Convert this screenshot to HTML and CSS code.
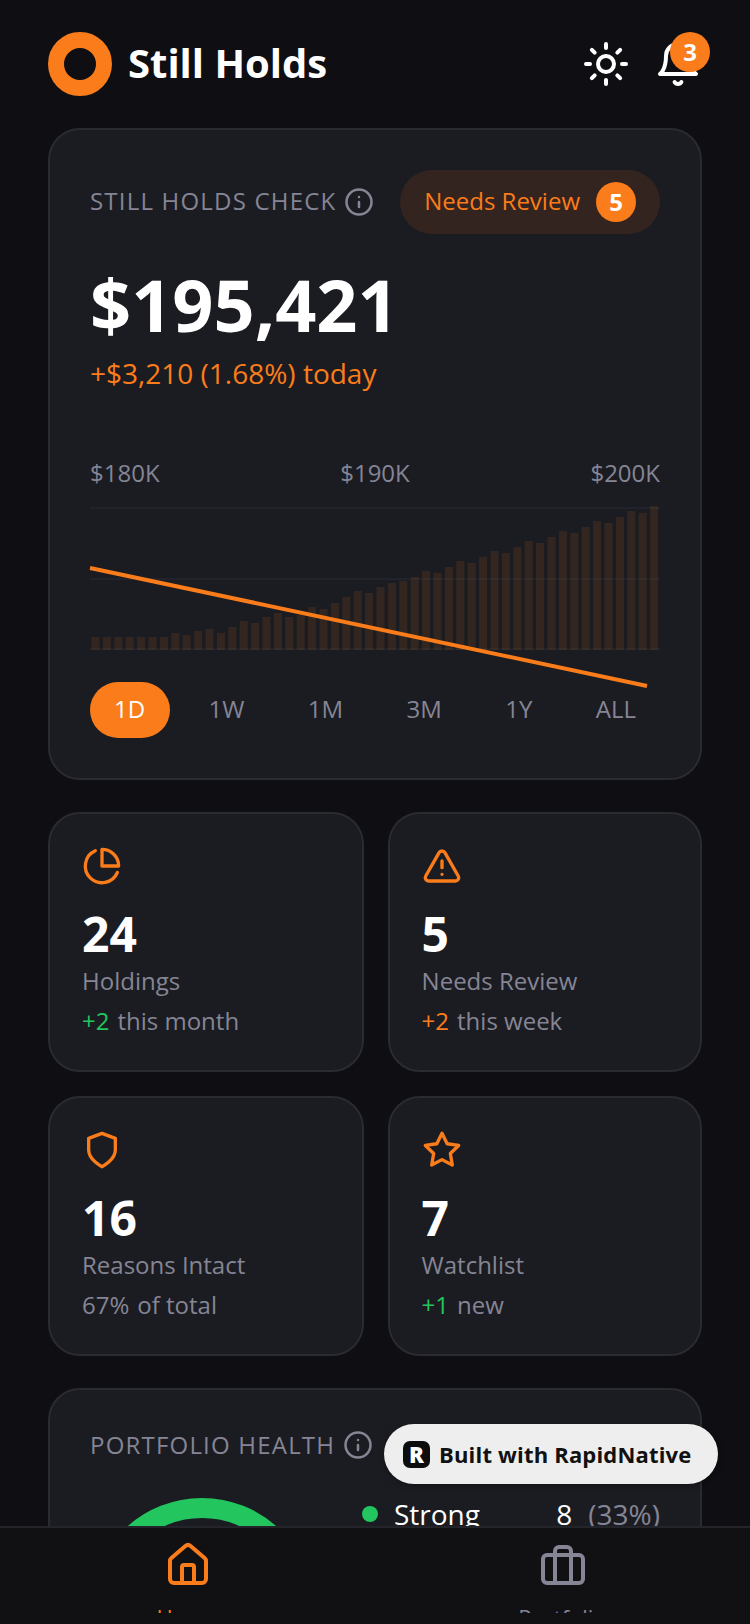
FILE: index.html
```html
<!DOCTYPE html>
<html lang="en">
<head>
  <meta charset="UTF-8">
  <meta name="viewport" content="width=device-width, initial-scale=1.0">
  <title>Still Holds</title>
  <link rel="stylesheet" href="styles.css">
</head>
<body>
  <div class="screen">
    <!-- header -->
    <header class="header">
      <div class="brand">
        <div class="logo"></div>
        <span class="brand-name">Still Holds</span>
      </div>
      <div class="header-actions">
        <svg class="icon-lg" viewBox="0 0 24 24">
          <circle cx="12" cy="12" r="4"/>
          <path d="M12 2v2M12 20v2M4.93 4.93l1.41 1.41M17.66 17.66l1.41 1.41M2 12h2M20 12h2M6.34 17.66l-1.41 1.41M19.07 4.93l-1.41 1.41"/>
        </svg>
        <div class="bell">
          <svg class="icon-lg" viewBox="0 0 24 24">
            <path d="M6 8a6 6 0 0 1 12 0c0 7 3 9 3 9H3s3-2 3-9"/>
            <path d="M10.3 21a1.94 1.94 0 0 0 3.4 0"/>
          </svg>
          <span class="bell-count">3</span>
        </div>
      </div>
    </header>

    <!-- main value card -->
    <section class="card main-card">
      <div class="card-top">
        <div class="card-title">
          <span class="raised">STILL HOLDS CHECK</span>
          <svg class="icon-info" viewBox="0 0 24 24">
            <circle cx="12" cy="12" r="10"/>
            <path d="M12 16v-4M12 8h.01"/>
          </svg>
        </div>
        <div class="review-pill">
          <span class="raised">Needs Review</span>
          <span class="review-count">5</span>
        </div>
      </div>
      <div class="balance">$195,421</div>
      <div class="delta">+$3,210 (1.68%) today</div>
      <div class="axis">
        <span>$180K</span>
        <span>$190K</span>
        <span>$200K</span>
      </div>
      <svg class="chart" viewBox="0 0 570 143">
        <g class="chart-grid">
          <path d="M0 1h570M0 72h570M0 142h570"/>
        </g>
        <g class="chart-bars">
          <rect x="1.5" y="130" width="8" height="13"/>
          <rect x="12.9" y="130" width="8" height="13"/>
          <rect x="24.3" y="130" width="8" height="13"/>
          <rect x="35.7" y="130" width="8" height="13"/>
          <rect x="47.1" y="130" width="8" height="13"/>
          <rect x="58.5" y="130" width="8" height="13"/>
          <rect x="69.9" y="130" width="8" height="13"/>
          <rect x="81.3" y="126" width="8" height="17"/>
          <rect x="92.7" y="128" width="8" height="15"/>
          <rect x="104.1" y="124" width="8" height="19"/>
          <rect x="115.5" y="122" width="8" height="21"/>
          <rect x="126.9" y="126" width="8" height="17"/>
          <rect x="138.3" y="120" width="8" height="23"/>
          <rect x="149.7" y="114" width="8" height="29"/>
          <rect x="161.1" y="116" width="8" height="27"/>
          <rect x="172.5" y="110" width="8" height="33"/>
          <rect x="183.9" y="106" width="8" height="37"/>
          <rect x="195.3" y="110" width="8" height="33"/>
          <rect x="206.7" y="108" width="8" height="35"/>
          <rect x="218.1" y="100" width="8" height="43"/>
          <rect x="229.5" y="102" width="8" height="41"/>
          <rect x="240.9" y="96" width="8" height="47"/>
          <rect x="252.3" y="90" width="8" height="53"/>
          <rect x="263.7" y="84" width="8" height="59"/>
          <rect x="275.1" y="86" width="8" height="57"/>
          <rect x="286.5" y="80" width="8" height="63"/>
          <rect x="297.9" y="76" width="8" height="67"/>
          <rect x="309.3" y="74" width="8" height="69"/>
          <rect x="320.7" y="70" width="8" height="73"/>
          <rect x="332.1" y="64" width="8" height="79"/>
          <rect x="343.5" y="66" width="8" height="77"/>
          <rect x="354.9" y="60" width="8" height="83"/>
          <rect x="366.3" y="54" width="8" height="89"/>
          <rect x="377.7" y="56" width="8" height="87"/>
          <rect x="389.1" y="50" width="8" height="93"/>
          <rect x="400.5" y="44" width="8" height="99"/>
          <rect x="411.9" y="46" width="8" height="97"/>
          <rect x="423.3" y="40" width="8" height="103"/>
          <rect x="434.7" y="34" width="8" height="109"/>
          <rect x="446.1" y="36" width="8" height="107"/>
          <rect x="457.5" y="30" width="8" height="113"/>
          <rect x="468.9" y="24" width="8" height="119"/>
          <rect x="480.3" y="26" width="8" height="117"/>
          <rect x="491.7" y="20" width="8" height="123"/>
          <rect x="503.1" y="14" width="8" height="129"/>
          <rect x="514.5" y="16" width="8" height="127"/>
          <rect x="525.9" y="10" width="8" height="133"/>
          <rect x="537.3" y="4" width="8" height="139"/>
          <rect x="548.7" y="6" width="8" height="137"/>
          <rect x="560.1" y="-1" width="8" height="144"/>
        </g>
        <path class="chart-line" d="M0 61L557 179"/>
      </svg>
      <div class="ranges">
        <span class="range active">1D</span>
        <span class="range">1W</span>
        <span class="range">1M</span>
        <span class="range">3M</span>
        <span class="range">1Y</span>
        <span class="range">ALL</span>
      </div>
    </section>

    <!-- stats -->
    <section class="stats">
      <div class="card stat-card">
        <svg class="icon-stat" viewBox="0 0 24 24">
          <path d="M21.21 15.89A10 10 0 1 1 8 2.83"/>
          <path d="M22 12A10 10 0 0 0 12 2v10z"/>
        </svg>
        <div class="stat-value">24</div>
        <div class="stat-label">Holdings</div>
        <div class="stat-note"><span class="green">+2</span><span>this month</span></div>
      </div>
      <div class="card stat-card">
        <svg class="icon-stat" viewBox="0 0 24 24">
          <path d="m21.73 18-8-14a2 2 0 0 0-3.48 0l-8 14A2 2 0 0 0 4 21h16a2 2 0 0 0 1.73-3"/>
          <path d="M12 9v4M12 17h.01"/>
        </svg>
        <div class="stat-value">5</div>
        <div class="stat-label">Needs Review</div>
        <div class="stat-note"><span class="orange">+2</span><span>this week</span></div>
      </div>
      <div class="card stat-card">
        <svg class="icon-stat" viewBox="0 0 24 24">
          <path d="M12 22s8-4 8-10V5l-8-3-8 3v7c0 6 8 10 8 10z"/>
        </svg>
        <div class="stat-value">16</div>
        <div class="stat-label">Reasons Intact</div>
        <div class="stat-note"><span>67%</span><span>of total</span></div>
      </div>
      <div class="card stat-card">
        <svg class="icon-stat" viewBox="0 0 24 24">
          <path d="M12 2l3.09 6.26L22 9.27l-5 4.87 1.18 6.88L12 17.77l-6.18 3.25L7 14.14 2 9.27l6.91-1.01z"/>
        </svg>
        <div class="stat-value">7</div>
        <div class="stat-label">Watchlist</div>
        <div class="stat-note"><span class="green">+1</span><span>new</span></div>
      </div>
    </section>

    <!-- health -->
    <section class="card health-card">
      <div class="card-title">
        <span>PORTFOLIO HEALTH</span>
        <svg class="icon-info" viewBox="0 0 24 24">
          <circle cx="12" cy="12" r="10"/>
          <path d="M12 16v-4M12 8h.01"/>
        </svg>
      </div>
      <div class="health-body">
        <div class="donut"></div>
        <div class="legend">
          <div class="legend-row">
            <span class="dot"></span>
            <span class="legend-name">Strong</span>
            <span class="legend-count">8</span>
            <span class="legend-pct">(33%)</span>
          </div>
        </div>
      </div>
    </section>

    <!-- built with badge -->
    <div class="built">
      <span class="built-logo">R</span>
      <span>Built with RapidNative</span>
    </div>

    <!-- bottom tabs -->
    <nav class="tabs">
      <div class="tab tab-active">
        <svg class="icon-lg" viewBox="0 0 24 24">
          <path d="M15 21v-8a1 1 0 0 0-1-1h-4a1 1 0 0 0-1 1v8"/>
          <path d="M3 10a2 2 0 0 1 .709-1.528l7-5.999a2 2 0 0 1 2.582 0l7 5.999A2 2 0 0 1 21 10v9a2 2 0 0 1-2 2H5a2 2 0 0 1-2-2z"/>
        </svg>
        <span class="tab-label">Home</span>
      </div>
      <div class="tab">
        <svg class="icon-lg" viewBox="0 0 24 24">
          <rect x="2" y="7" width="20" height="14" rx="2"/>
          <path d="M16 21V5a2 2 0 0 0-2-2h-4a2 2 0 0 0-2 2v16"/>
        </svg>
        <span class="tab-label">Portfolio</span>
      </div>
    </nav>
  </div>
</body>
</html>
```

FILE: styles.css
```css
* {
  box-sizing: border-box;
}

body {
  margin: 0;
  background-color: #0e0e13;
  color: #fff;
  font-family: "Open Sans", "Noto Sans", sans-serif;
}

.screen {
  position: relative;
  width: 750px;
  height: 1624px;
  padding: 32px 48px 0;
  overflow: hidden;
}

svg {
  fill: none;
  stroke: currentColor;
  stroke-width: 2;
  stroke-linecap: round;
  stroke-linejoin: round;
  flex-shrink: 0;
}

.icon-lg {
  display: block;
  width: 48px;
  height: 48px;
}

.icon-info {
  width: 30px;
  height: 30px;
}

.icon-stat {
  display: block;
  width: 40px;
  height: 40px;
  color: #fa7c1a;
}

.raised {
  margin-bottom: 2px;
}

/* header */
.header {
  display: flex;
  align-items: center;
  justify-content: space-between;
  height: 64px;
}

.brand {
  display: flex;
  align-items: center;
  gap: 16px;
}

.logo {
  width: 64px;
  height: 64px;
  border: 16px solid #fa7c1a;
  border-radius: 50%;
}

.brand-name {
  margin-bottom: 3px;
  font-size: 40px;
  font-weight: 700;
}

.header-actions {
  display: flex;
  align-items: center;
  gap: 24px;
}

.bell {
  position: relative;
}

.bell-count {
  position: absolute;
  top: -8px;
  right: -8px;
  width: 40px;
  height: 40px;
  border-radius: 50%;
  background-color: #fa7c1a;
  font-size: 24px;
  font-weight: 700;
  line-height: 40px;
  text-align: center;
}

/* cards */
.card {
  background-color: #1b1c21;
  border: 2px solid #2a2b31;
  border-radius: 32px;
}

.main-card {
  height: 652px;
  margin-top: 32px;
  padding: 40px;
}

.card-top {
  display: flex;
  align-items: center;
  justify-content: space-between;
  height: 64px;
}

.card-title {
  display: flex;
  align-items: center;
  gap: 8px;
  color: #858595;
  font-size: 24px;
  letter-spacing: 1.2px;
  line-height: 28px;
}

.review-pill {
  display: flex;
  align-items: center;
  gap: 16px;
  height: 64px;
  padding: 0 24px;
  border-radius: 32px;
  background-color: #33241f;
  color: #fa7c1a;
  font-size: 24px;
  line-height: 28px;
}

.review-count {
  width: 40px;
  height: 40px;
  border-radius: 50%;
  background-color: #fa7c1a;
  color: #fff;
  font-weight: 700;
  line-height: 40px;
  text-align: center;
}

.balance {
  margin-top: 30px;
  font-size: 72px;
  font-weight: 700;
  line-height: 80px;
}

.delta {
  margin-top: 11px;
  color: #fa7c1a;
  font-size: 28px;
  line-height: 36px;
}

.axis {
  display: flex;
  justify-content: space-between;
  margin-top: 66px;
  color: #858595;
  font-size: 24px;
  line-height: 32px;
}

.chart {
  display: block;
  width: 570px;
  height: 143px;
  margin-top: 18px;
  overflow: visible;
}

.chart-grid {
  stroke: #22232a;
  stroke-linecap: butt;
}

.chart-bars {
  fill: #fa7c1a;
  fill-opacity: 0.11;
  stroke: none;
}

.chart-line {
  stroke: #fa7c1a;
  stroke-width: 4;
  stroke-linecap: butt;
}

.ranges {
  display: flex;
  justify-content: space-between;
  margin-top: 32px;
}

.range {
  height: 56px;
  padding: 0 24px;
  border-radius: 28px;
  color: #858595;
  font-size: 24px;
  line-height: 54px;
}

.range.active {
  margin-right: -1px;
  padding-right: 25px;
  background-color: #fa7c1a;
  color: #fff;
}

/* stat grid */
.stats {
  display: grid;
  grid-template-columns: 315.6px 314.4px;
  gap: 24px;
  margin-top: 32px;
}

.stat-card {
  height: 260px;
  padding: 32px;
}

.stat-value {
  margin-top: 20px;
  font-size: 48px;
  font-weight: 700;
  line-height: 56px;
}

.stat-label {
  margin-top: 1px;
  color: #858595;
  font-size: 24px;
  line-height: 36px;
}

.stat-note {
  display: flex;
  gap: 8px;
  margin-top: 4px;
  color: #858595;
  font-size: 24px;
  line-height: 36px;
}

.green {
  color: #22c55e;
}

.orange {
  color: #fa7c1a;
}

/* health card */
.health-card {
  height: 400px;
  margin-top: 32px;
  padding: 40px;
}

.health-body {
  display: flex;
  gap: 48px;
  margin-top: 34px;
}

.donut {
  width: 224px;
  height: 224px;
  margin-top: 4px;
  border: 20px solid #22c55e;
  border-radius: 50%;
}

.legend {
  flex: 1;
}

.legend-row {
  display: flex;
  align-items: center;
  font-size: 28px;
  line-height: 40px;
}

.dot {
  width: 16px;
  height: 16px;
  margin-right: 16px;
  border-radius: 50%;
  background-color: #22c55e;
}

.legend-name {
  flex: 1;
}

.legend-pct {
  margin-left: 16px;
  color: #858595;
}

/* floating badge */
.built {
  position: absolute;
  top: 1424px;
  right: 32px;
  display: flex;
  align-items: center;
  gap: 9px;
  width: 334px;
  height: 60px;
  padding: 0 19px;
  border-radius: 30px;
  background-color: #eeeeee;
  box-shadow: 0 2px 6px rgba(0, 0, 0, 0.3);
  color: #111;
  font-size: 22px;
  font-weight: 700;
  letter-spacing: 0.18px;
  white-space: nowrap;
}

.built-logo {
  width: 27px;
  height: 27px;
  border-radius: 7px;
  background-color: #0d0d0d;
  color: #fff;
  font-size: 22px;
  font-weight: 800;
  line-height: 27px;
  text-align: center;
}

/* tab bar */
.tabs {
  position: absolute;
  left: 0;
  right: 0;
  top: 1526px;
  display: flex;
  height: 98px;
  border-top: 2px solid #24252a;
  background-color: #111114;
}

.tab {
  display: flex;
  flex: 1;
  flex-direction: column;
  align-items: center;
  height: 85px;
  padding-top: 13px;
  overflow: hidden;
  color: #858595;
}

.tab-active {
  color: #fa7c1a;
}

.tab-label {
  margin-top: 13px;
  font-size: 22px;
  line-height: 30px;
}
```
